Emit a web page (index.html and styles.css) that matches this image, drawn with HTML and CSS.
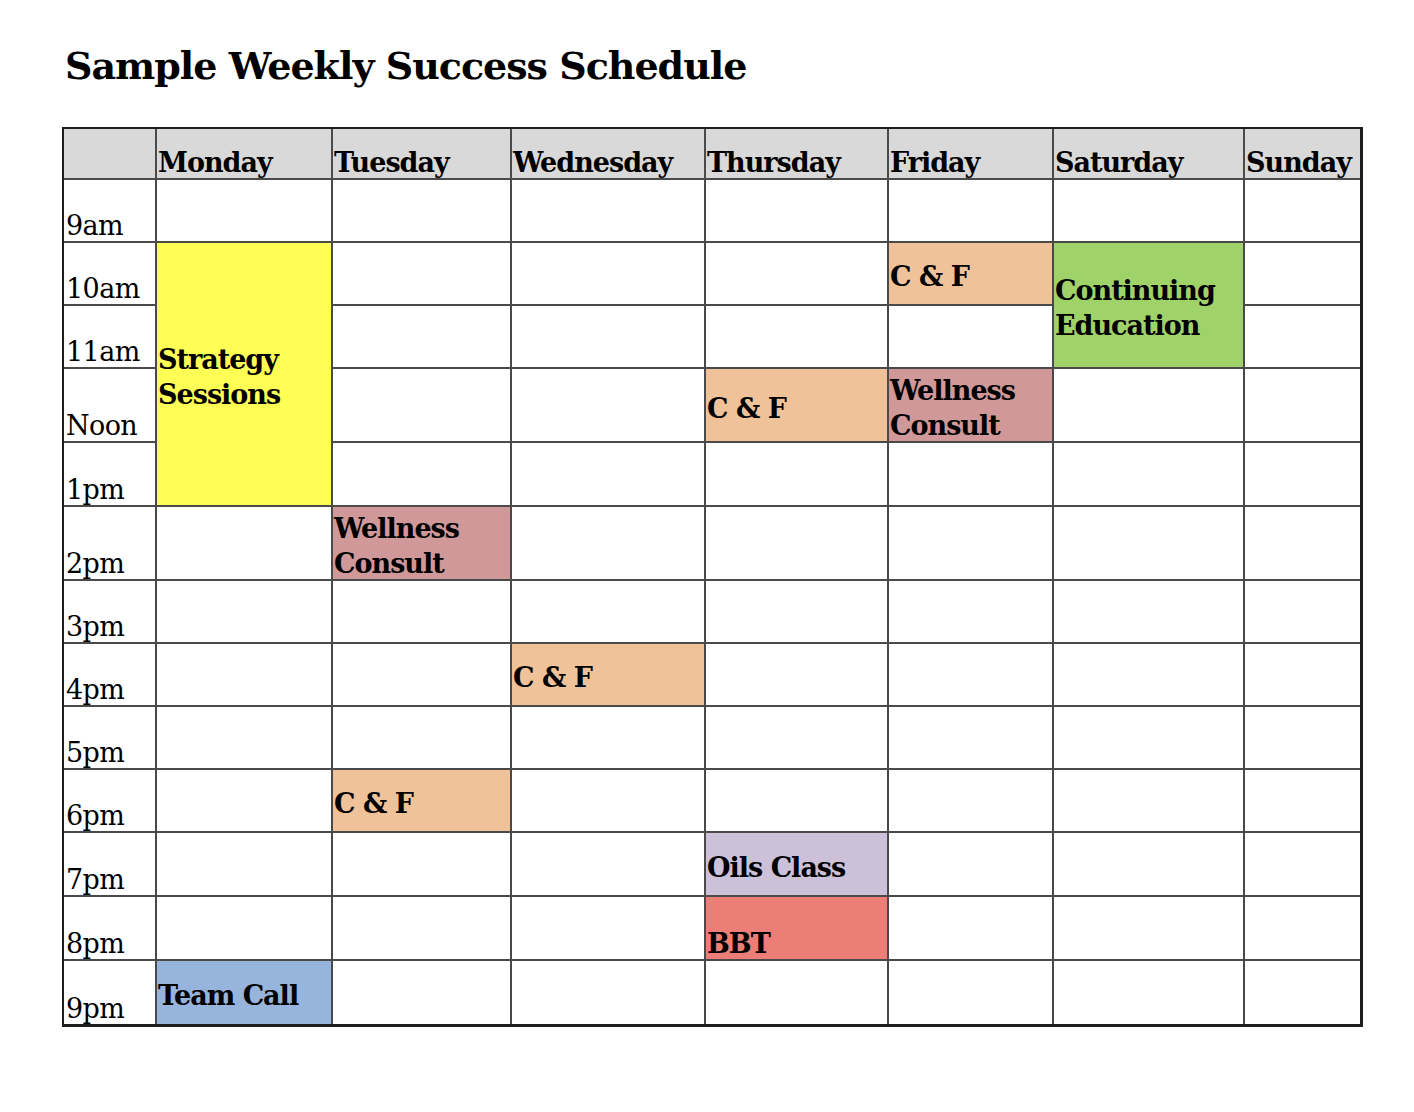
FILE: index.html
```html
<!DOCTYPE html>
<html lang="en">
<head>
<meta charset="utf-8">
<title>Sample Weekly Success Schedule</title>
<link rel="stylesheet" href="styles.css">
</head>
<body>
<main class="page">
  <h1 class="title">Sample Weekly Success Schedule</h1>
  <div class="schedule">
    <div class="cell head"></div>
    <div class="cell head">Monday</div>
    <div class="cell head">Tuesday</div>
    <div class="cell head">Wednesday</div>
    <div class="cell head">Thursday</div>
    <div class="cell head">Friday</div>
    <div class="cell head">Saturday</div>
    <div class="cell head">Sunday</div>

    <div class="cell time">9am</div>
    <div class="cell"></div><div class="cell"></div><div class="cell"></div><div class="cell"></div><div class="cell"></div><div class="cell"></div><div class="cell"></div>

    <div class="cell time">10am</div>
    <div class="cell event yellow span4">Strategy<br>Sessions</div>
    <div class="cell"></div><div class="cell"></div><div class="cell"></div>
    <div class="cell event peach">C &amp; F</div>
    <div class="cell event green span2">Continuing<br>Education</div>
    <div class="cell"></div>

    <div class="cell time">11am</div>
    <div class="cell"></div><div class="cell"></div><div class="cell"></div><div class="cell"></div>
    <div class="cell"></div>

    <div class="cell time">Noon</div>
    <div class="cell"></div><div class="cell"></div>
    <div class="cell event peach">C &amp; F</div>
    <div class="cell event rose">Wellness<br>Consult</div>
    <div class="cell"></div><div class="cell"></div>

    <div class="cell time">1pm</div>
    <div class="cell"></div><div class="cell"></div><div class="cell"></div><div class="cell"></div><div class="cell"></div><div class="cell"></div>

    <div class="cell time">2pm</div>
    <div class="cell"></div>
    <div class="cell event rose">Wellness<br>Consult</div>
    <div class="cell"></div><div class="cell"></div><div class="cell"></div><div class="cell"></div><div class="cell"></div>

    <div class="cell time">3pm</div>
    <div class="cell"></div><div class="cell"></div><div class="cell"></div><div class="cell"></div><div class="cell"></div><div class="cell"></div><div class="cell"></div>

    <div class="cell time">4pm</div>
    <div class="cell"></div><div class="cell"></div>
    <div class="cell event peach">C &amp; F</div>
    <div class="cell"></div><div class="cell"></div><div class="cell"></div><div class="cell"></div>

    <div class="cell time">5pm</div>
    <div class="cell"></div><div class="cell"></div><div class="cell"></div><div class="cell"></div><div class="cell"></div><div class="cell"></div><div class="cell"></div>

    <div class="cell time">6pm</div>
    <div class="cell"></div>
    <div class="cell event peach">C &amp; F</div>
    <div class="cell"></div><div class="cell"></div><div class="cell"></div><div class="cell"></div><div class="cell"></div>

    <div class="cell time">7pm</div>
    <div class="cell"></div><div class="cell"></div><div class="cell"></div>
    <div class="cell event lavender">Oils Class</div>
    <div class="cell"></div><div class="cell"></div><div class="cell"></div>

    <div class="cell time">8pm</div>
    <div class="cell"></div><div class="cell"></div><div class="cell"></div>
    <div class="cell event salmon bottom">BBT</div>
    <div class="cell"></div><div class="cell"></div><div class="cell"></div>

    <div class="cell time">9pm</div>
    <div class="cell event blue">Team Call</div>
    <div class="cell"></div><div class="cell"></div><div class="cell"></div><div class="cell"></div><div class="cell"></div><div class="cell"></div>
  </div>
</main>
</body>
</html>
```

FILE: styles.css
```css
html, body {
  margin: 0;
  padding: 0;
  background: #ffffff;
}

.page {
  padding: 0 0 0 62px;
  font-family: "DejaVu Serif", "Liberation Serif", serif;
  color: #000;
}

.title {
  margin: 0;
  padding: 44px 0 0 3px;
  font-size: 38px;
  line-height: 44px;
  font-weight: bold;
  height: 85px;
  box-sizing: border-box;
  letter-spacing: -1px;
}

.schedule {
  display: grid;
  grid-template-columns: 91px 174px 177px 192px 181px 163px 189px 115px;
  grid-template-rows: 49px 61px 61px 61px 72px 62px 72px 61px 61px 61px 61px 62px 62px 63px;
  gap: 2px;
  width: max-content;
  margin-top: 42px;
  background: #4a4a4a;
  border: 2px solid #1e1e1e;
  border-right-width: 3px;
  border-bottom-width: 3px;
}

.cell {
  background: #ffffff;
  padding: 0 2px;
  display: flex;
  flex-direction: column;
  justify-content: center;
  font-size: 27px;
  line-height: 35px;
  overflow: hidden;
}

.head {
  background: #d9d9d9;
  font-weight: bold;
  justify-content: flex-end;
  line-height: 30px;
  letter-spacing: -1px;
  padding-left: 1px;
}

.time {
  justify-content: flex-end;
  line-height: 30px;
  letter-spacing: -0.6px;
}

.event {
  font-weight: bold;
  letter-spacing: -1px;
  padding-left: 1px;
  padding-top: 6px;
}

.bottom {
  justify-content: flex-end;
  line-height: 30px;
  padding-top: 0;
}

.span4 { grid-row: span 4; }
.span2 { grid-row: span 2; }

.yellow { background: #fefe55; }
.peach { background: #f0c29a; }
.rose { background: #d09898; }
.green { background: #9fd36a; }
.lavender { background: #cdc1da; }
.salmon { background: #ec7e77; }
.blue { background: #97b4dd; }
```
